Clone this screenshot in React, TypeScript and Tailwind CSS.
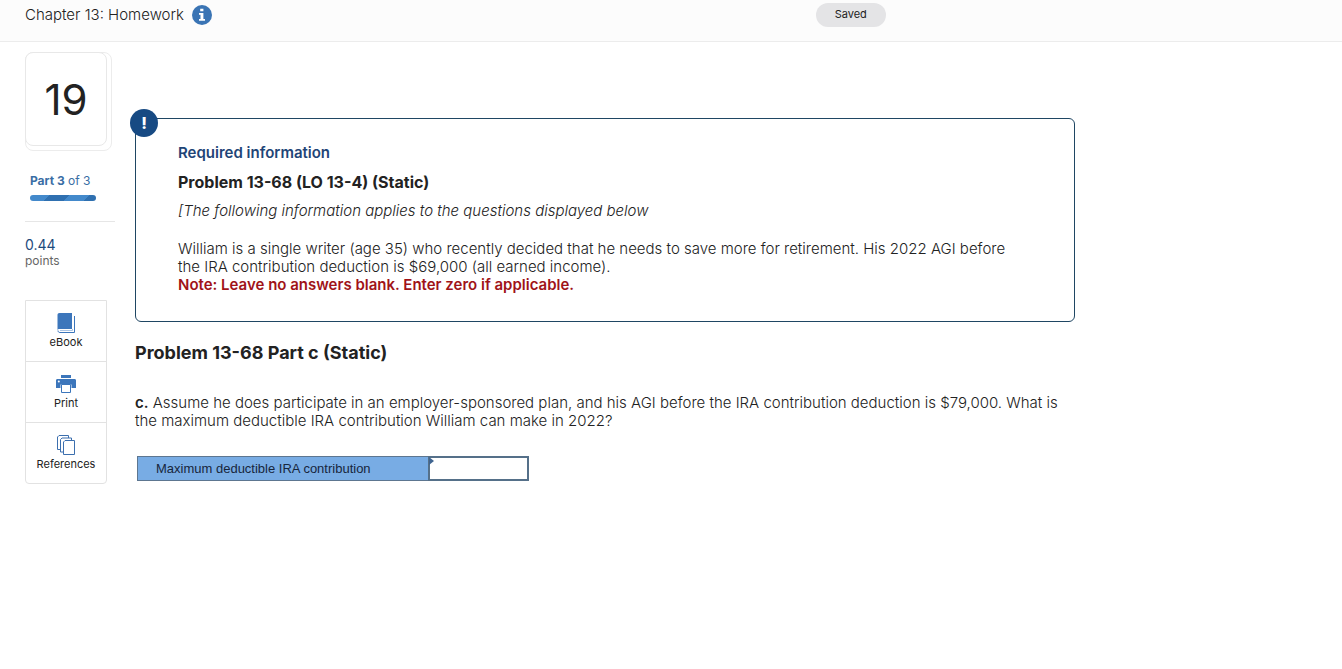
import React from 'react';

function InfoIcon() {
  return (
    <svg viewBox="0 0 20 20" className="size-5" aria-hidden="true">
      <circle cx="10" cy="10" r="10" fill="#3a74b4" />
      <path d="M8.2 3.8h3.2v2.5H8.2zM7 8h4.4v6h1.600v1.8H7V14h1.500V9.800H7z" fill="#fff" />
    </svg>
  );
}

function BookIcon() {
  return (
    <svg viewBox="0 0 18 20" className="h-5 w-[18px]" aria-hidden="true">
      <path d="M2.500 0H15v16H2.500C1.200 16 .5 16.500.5 17.500V2C.5.700 1.200 0 2.500 0z" fill="#3c76bb" />
      <path d="M1 17.500c0 1.300.7 2 2 2h14.500V3" fill="none" stroke="#3c76bb" />
      <path d="M3 17.500h12.500V16" fill="none" stroke="#a9c4e4" />
    </svg>
  );
}

function PrinterIcon() {
  return (
    <svg viewBox="0 0 20 18" className="h-[18px] w-5" aria-hidden="true">
      <path d="M5 0h10v3H5z" fill="#3c76bb" />
      <path d="M1.500 4h17c1 0 1.500.6 1.500 1.500V13h-4.500V9.500h-11V13H0V5.500C0 4.600.5 4 1.500 4z" fill="#3c76bb" />
      <circle cx="2.800" cy="6.500" r="1" fill="#fff" />
      <path d="M5.500 9.500h9v8h-9z" fill="#fff" stroke="#3c76bb" />
    </svg>
  );
}

function PagesIcon() {
  return (
    <svg viewBox="0 0 18 20" className="h-5 w-[18px]" aria-hidden="true">
      <g fill="#fff" stroke="#3c6fae" strokeWidth="1">
        <path d="M2 .5h9.500v14H.5V2z" />
        <path d="M5 3h9.500v14H3.500V4.500z" />
        <path d="M8 5.500h9.500v14H6.500V7z" />
      </g>
    </svg>
  );
}

const tools = [
  { label: 'eBook', icon: <BookIcon /> },
  { label: 'Print', icon: <PrinterIcon /> },
  { label: 'References', icon: <PagesIcon /> },
];

function Sidebar() {
  return (
    <aside className="w-[90px] shrink-0">
      <div className="w-[87px] rounded-lg border border-[#ececec] pr-1 pb-1">
        <div className="-mt-px -ml-px flex h-[94px] items-center justify-center rounded-lg border border-[#e8e8e8] bg-white text-[42px] text-[#222]">
          19
        </div>
      </div>
      <div className="px-[5px] pt-[22px] pb-5">
        <p className="text-xs leading-4 text-[#3a6ea5]">
          <b className="font-bold">Part 3</b> of 3
        </p>
        <div className="mt-[6px] h-[6px] w-[66px] rounded-full bg-[linear-gradient(135deg,#4389cb_25%,#2f70b0_25%,#2f70b0_50%,#4389cb_50%,#4389cb_75%,#2f70b0_75%)] bg-[length:40px_40px]" />
      </div>
      <div className="border-t border-[#e6e6e6] pt-[15px]">
        <p className="text-sm leading-4 text-[#1d4a7c]">0.44</p>
        <p className="text-xs leading-4 text-[#666]">points</p>
      </div>
      <nav className="mt-[31px] w-[82px] divide-y divide-[#e2e2e2] rounded-b border border-[#e2e2e2]">
        {tools.map((tool) => (
          <button
            key={tool.label}
            type="button"
            className="flex h-[61px] w-full flex-col items-center justify-start gap-px pt-3 text-[11px] leading-4 text-[#222] last:h-[60px]"
          >
            <span className="flex h-5 items-center">{tool.icon}</span>
            {tool.label}
          </button>
        ))}
      </nav>
    </aside>
  );
}

export default function App() {
  return (
    <div className="min-h-screen bg-white font-['Inter',sans-serif] text-[#222]">
      <header className="flex h-[42px] items-start border-b border-[#ececec] bg-[#fcfcfc]">
        <h1 className="pt-[5px] pl-[25px] text-[15px] leading-5 font-light text-[#222]">Chapter 13: Homework</h1>
        <button type="button" aria-label="Assignment information" className="mt-[5px] ml-2">
          <InfoIcon />
        </button>
        <span className="mt-[3px] mr-[34%] ml-auto flex h-6 w-[70px] items-center justify-center rounded-full bg-[#e4e4e6] pb-px text-[11px] text-[#222]">
          Saved
        </span>
      </header>

      <div className="flex items-start gap-5 px-[25px] pt-[10px]">
        <Sidebar />
        <main className="min-w-0 max-w-[940px] flex-1 pt-[66px]">
          <section className="relative rounded-md border border-[#1f4663] pt-[25px] pr-[60px] pb-[27px] pl-[42px]">
            <span className="absolute -top-[10px] -left-[6px] flex size-7 items-center justify-center rounded-full bg-[#174a83] text-base font-extrabold text-white">
              !
            </span>
            <h2 className="text-[15px] leading-[18px] font-semibold text-[#1f4577]">Required information</h2>
            <h3 className="mt-[10px] text-base leading-5 font-bold">Problem 13-68 (LO 13-4) (Static)</h3>
            <p className="mt-[10px] text-[15px] leading-[18px] font-light italic">
              [The following information applies to the questions displayed below
            </p>
            <p className="mt-5 text-[15px] leading-[18px] font-light">
              William is a single writer (age 35) who recently decided that he needs to save more for retirement. His
              2022 AGI before the IRA contribution deduction is $69,000 (all earned income).
            </p>
            <p className="text-[15px] leading-[18px] font-semibold text-[#a01318]">
              Note: Leave no answers blank. Enter zero if applicable.
            </p>
          </section>

          <h2 className="mt-5 text-lg leading-[22px] font-bold">Problem 13-68 Part c (Static)</h2>
          <p className="mt-[30px] text-[15px] leading-[18px] font-light">
            <b className="font-semibold">c.</b> Assume he does participate in an employer-sponsored plan, and his AGI
            before the IRA contribution deduction is $79,000. What is the maximum deductible IRA contribution William
            can make in 2022?
          </p>

          <table className="mt-[26px] ml-[2px] border-separate border-spacing-0 font-['Liberation_Sans',Arial,sans-serif] text-[13px]">
            <tbody>
              <tr>
                <th
                  scope="row"
                  className="h-[25px] w-[291px] border border-r-0 border-[#5d7690] bg-[#78ace4] p-0 pl-[18px] text-left font-normal text-[#17263c]"
                >
                  <label htmlFor="max-contribution">Maximum deductible IRA contribution</label>
                </th>
                <td className="relative w-[101px] p-0">
                  <input
                    id="max-contribution"
                    type="text"
                    className="block h-[25px] w-full border-2 border-[#557089] bg-white px-2 outline-none"
                  />
                  <svg viewBox="0 0 5 8" className="absolute top-px left-px h-2 w-[5px]" aria-hidden="true">
                    <path d="M0 0l5 4-5 4z" fill="#3f6490" />
                  </svg>
                </td>
              </tr>
            </tbody>
          </table>
        </main>
      </div>
    </div>
  );
}
